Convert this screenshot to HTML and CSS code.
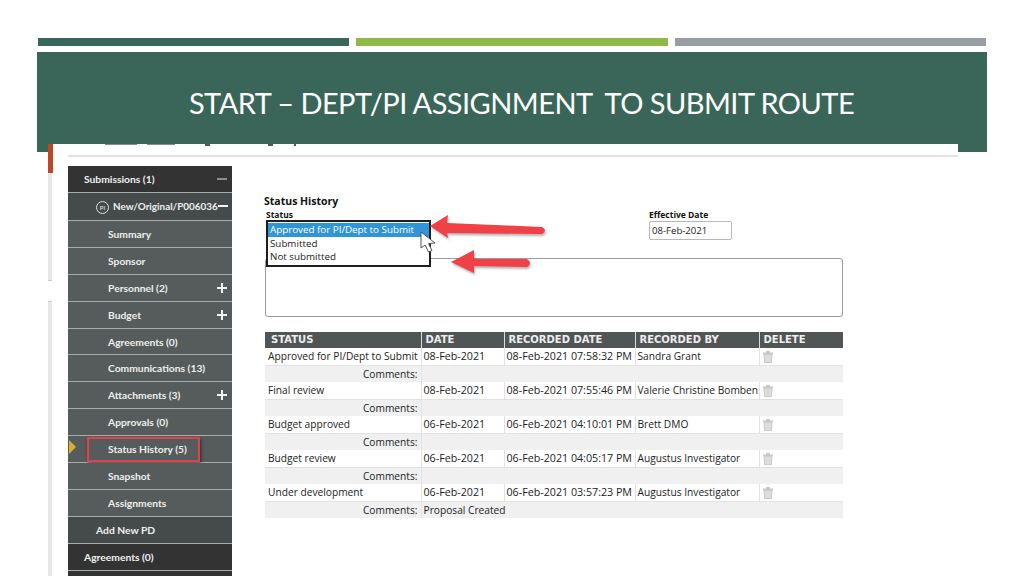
FILE: index.html
```html
<!DOCTYPE html>
<html lang="en">
<head>
  <meta charset="UTF-8" />
  <title>Start - Dept/PI Assignment to Submit Route</title>
  <link rel="stylesheet" href="styles.css">
</head>
<body>
  <div class="slide">
    <div class="top-bars">
      <div class="bar bar-green"></div>
      <div class="bar bar-lime"></div>
      <div class="bar bar-grey"></div>
    </div>
    <div class="title-band">
      <h1>START – DEPT/PI ASSIGNMENT&nbsp; TO SUBMIT ROUTE</h1>
    </div>

    <div class="shot">
      <div class="shot-edge"><div class="edge-red"></div><div class="edge-box"></div></div>
      <div class="shot-main">
        <div class="cut-row">
          <span class="cut-a"></span><span class="cut-b"></span>
          <span class="cut-c"></span><span class="cut-d"></span><span class="cut-e"></span>
        </div>
        <div class="shot-body">
          <ul class="nav">
            <li class="nav-top"><span class="pad-1">Submissions (1)</span><i class="sign minus-dim"></i></li>
            <li class="nav-mid"><span class="pad-2"><span class="pi">PI</span><span class="pd-name">New/Original/P006036</span></span><i class="sign minus-tight"></i></li>
            <li class="nav-sub">Summary</li>
            <li class="nav-sub">Sponsor</li>
            <li class="nav-sub">Personnel (2)<i class="sign plus"></i></li>
            <li class="nav-sub">Budget<i class="sign plus"></i></li>
            <li class="nav-sub">Agreements (0)</li>
            <li class="nav-sub">Communications (13)</li>
            <li class="nav-sub">Attachments (3)<i class="sign plus"></i></li>
            <li class="nav-sub">Approvals (0)</li>
            <li class="nav-sub nav-current">Status History (5)</li>
            <li class="nav-sub">Snapshot</li>
            <li class="nav-sub">Assignments</li>
            <li class="nav-mid"><span class="pad-2">Add New PD</span></li>
            <li class="nav-top"><span class="pad-1">Agreements (0)</span></li>
            <li class="nav-top"></li>
          </ul>

          <div class="content">
            <h2>Status History</h2>
            <div class="form-row">
              <div class="field-status">
                <label>Status</label>
              </div>
              <div class="field-date">
                <label>Effective Date</label>
                <div class="date-input">08-Feb-2021</div>
              </div>
            </div>
            <div class="comment-box"></div>

            <div class="listbox">
              <div class="opt opt-on">Approved for PI/Dept to Submit</div>
              <div class="opt">Submitted</div>
              <div class="opt">Not submitted</div>
            </div>
            <svg class="callouts" width="140" height="70" viewBox="0 0 140 70">
              <path class="arrow" d="M15 16 L33 5 L32 13 L127 17 Q133 20.500 127 24 L32 23 L33 28 Z"/>
              <path class="arrow" d="M36 52 L59 40 L59 49 L112 49 Q118 53 112 57 L59 56 L59 63 Z"/>
              <path class="cursor" d="M6 22 L6 38 L10 35 L13.500 42 L17 40.500 L13.500 33.500 L20 33 Z"/>
            </svg>

            <table class="history">
              <colgroup>
                <col class="c-status"><col class="c-date"><col class="c-rec"><col class="c-by"><col class="c-del">
              </colgroup>
              <thead>
                <tr><th>STATUS</th><th>DATE</th><th>RECORDED DATE</th><th>RECORDED BY</th><th>DELETE</th></tr>
              </thead>
              <tbody>
                <tr class="row-data">
                  <td>Approved for PI/Dept to Submit</td><td>08-Feb-2021</td><td>08-Feb-2021 07:58:32 PM</td><td>Sandra Grant</td>
                  <td><svg class="trash" width="12" height="13" viewBox="0 0 12 13"><path d="M1 2.500 H11 V4 H1 Z M4 1 H8 V2.500 H4 Z" fill="#c8c8c4"/><path d="M2 4 H10 L9.500 12.500 H2.500 Z" fill="#dcdcd8" stroke="#c0c0bc" stroke-width=".8"/></svg></td>
                </tr>
                <tr class="row-note"><td class="note-key">Comments:</td><td colspan="4"></td></tr>
                <tr class="row-data">
                  <td>Final review</td><td>08-Feb-2021</td><td>08-Feb-2021 07:55:46 PM</td><td>Valerie Christine Bomben</td>
                  <td><svg class="trash" width="12" height="13" viewBox="0 0 12 13"><path d="M1 2.500 H11 V4 H1 Z M4 1 H8 V2.500 H4 Z" fill="#c8c8c4"/><path d="M2 4 H10 L9.500 12.500 H2.500 Z" fill="#dcdcd8" stroke="#c0c0bc" stroke-width=".8"/></svg></td>
                </tr>
                <tr class="row-note"><td class="note-key">Comments:</td><td colspan="4"></td></tr>
                <tr class="row-data">
                  <td>Budget approved</td><td>06-Feb-2021</td><td>06-Feb-2021 04:10:01 PM</td><td>Brett DMO</td>
                  <td><svg class="trash" width="12" height="13" viewBox="0 0 12 13"><path d="M1 2.500 H11 V4 H1 Z M4 1 H8 V2.500 H4 Z" fill="#c8c8c4"/><path d="M2 4 H10 L9.500 12.500 H2.500 Z" fill="#dcdcd8" stroke="#c0c0bc" stroke-width=".8"/></svg></td>
                </tr>
                <tr class="row-note"><td class="note-key">Comments:</td><td colspan="4"></td></tr>
                <tr class="row-data">
                  <td>Budget review</td><td>06-Feb-2021</td><td>06-Feb-2021 04:05:17 PM</td><td>Augustus Investigator</td>
                  <td><svg class="trash" width="12" height="13" viewBox="0 0 12 13"><path d="M1 2.500 H11 V4 H1 Z M4 1 H8 V2.500 H4 Z" fill="#c8c8c4"/><path d="M2 4 H10 L9.500 12.500 H2.500 Z" fill="#dcdcd8" stroke="#c0c0bc" stroke-width=".8"/></svg></td>
                </tr>
                <tr class="row-note"><td class="note-key">Comments:</td><td colspan="4"></td></tr>
                <tr class="row-data">
                  <td>Under development</td><td>06-Feb-2021</td><td>06-Feb-2021 03:57:23 PM</td><td>Augustus Investigator</td>
                  <td><svg class="trash" width="12" height="13" viewBox="0 0 12 13"><path d="M1 2.500 H11 V4 H1 Z M4 1 H8 V2.500 H4 Z" fill="#c8c8c4"/><path d="M2 4 H10 L9.500 12.500 H2.500 Z" fill="#dcdcd8" stroke="#c0c0bc" stroke-width=".8"/></svg></td>
                </tr>
                <tr class="row-note"><td class="note-key">Comments:</td><td colspan="4">Proposal Created</td></tr>
              </tbody>
            </table>
          </div>
        </div>
      </div>
    </div>
  </div>
</body>
</html>
```

FILE: styles.css
```css
html, body {
  margin: 0;
  padding: 0;
  background: #fff;
}

.slide {
  width: 1024px;
  height: 576px;
  overflow: hidden;
  background: #fff;
}

/* top strips */
.top-bars {
  display: flex;
  gap: 7px;
  padding: 38px 38px 0 38px;
}
.bar {
  height: 8px;
  flex: 1;
}
.bar-green { background: #38665a; }
.bar-lime { background: #8fba48; }
.bar-grey { background: #989ca3; }

.title-band {
  margin: 6px 37px 0 37px;
  height: 100px;
  background: #396658;
  display: flex;
  justify-content: center;
  padding: 32px 0 0 19px;
  box-sizing: border-box;
}
.title-band h1 {
  margin: 0;
  font-family: "Lato", sans-serif;
  font-weight: 400;
  font-size: 29px;
  letter-spacing: -0.55px;
  line-height: 38px;
  color: #fff;
  white-space: nowrap;
}

/* pasted screenshot sits over the band */
.shot {
  position: relative;
  margin: -8px 66px 0 48px;
  display: flex;
  height: 432px;
  background: #fff;
}
.shot-edge {
  width: 4px;
  background: #e8e8e8;
  margin-right: 16px;
}
.edge-red {
  width: 5px;
  height: 29px;
  background: #bf4528;
}
.edge-box {
  margin-top: 107px;
  height: 20px;
  background: #fff;
  border-top: 1px solid #ccc;
  border-bottom: 1px solid #ccc;
}
.shot-main {
  flex: 1;
}
.cut-row {
  height: 11px;
  border-bottom: 2px solid #e2e2e2;
  display: flex;
  align-items: flex-start;
  padding-left: 37px;
}
.cut-row span {
  display: block;
  height: 1px;
  background: #8a8a8a;
}
.cut-a { width: 32px; }
.cut-b { width: 28px; margin-left: 10px; }
.cut-row .cut-c { width: 5px; height: 2px; margin-left: 30px; background: #555; }
.cut-row .cut-d { width: 5px; height: 2px; margin-left: 58px; background: #555; }
.cut-row .cut-e { width: 2px; height: 2px; margin-left: 21px; background: #555; }

.shot-body {
  display: flex;
  margin-top: 9px;
}

/* side menu */
.nav {
  list-style: none;
  margin: 0;
  padding: 0;
  width: 164px;
  flex: none;
  font-family: "Lato", sans-serif;
  font-weight: 700;
  font-size: 10.3px;
  color: #eef0ef;
}
.nav li {
  position: relative;
  height: 25.9px;
  line-height: 26px;
  border-bottom: 1px solid #a9adac;
  white-space: nowrap;
}
.nav li:first-child { height: 26px; }
.nav-top + .nav-mid { height: 27px; }
.nav-top { background: #333; }
.nav-mid { background: #454b4a; }
.nav-sub {
  background: #555c5b;
  padding-left: 40px;
}
.pad-1 { padding-left: 16px; }
.pad-2 { padding-left: 28px; }
.pd-name { font-size: 9.9px; }
.pi {
  display: inline-block;
  width: 11px;
  height: 11px;
  line-height: 11px;
  border: 1px solid #ddd;
  border-radius: 50%;
  font-size: 6px;
  font-weight: 400;
  text-align: center;
  margin-right: 4px;
}

.sign {
  position: absolute;
  right: 5px;
  top: 12px;
  width: 10px;
  height: 2px;
  background: #f2f2f2;
}
.minus-dim { background: #8d8d8d; }
.minus-tight { right: 4px; }
.plus::after {
  content: "";
  position: absolute;
  left: 4px;
  top: -4px;
  width: 2px;
  height: 10px;
  background: #f2f2f2;
}

.nav-current::before {
  content: "";
  position: absolute;
  left: 1px;
  top: 4px;
  border-left: 7px solid #d9b02c;
  border-top: 7px solid transparent;
  border-bottom: 7px solid transparent;
}
.nav-current::after {
  content: "";
  position: absolute;
  left: 19px;
  top: 1px;
  width: 109px;
  height: 21px;
  border: 2.5px solid #e0424c;
  box-shadow: 1px 2px 3px rgba(0, 0, 0, .5);
}

/* status form */
.content {
  position: relative;
  margin-left: 33px;
  width: 578px;
  font-family: "Open Sans", sans-serif;
  font-size: 10.2px;
  color: #222;
}
.content h2 {
  margin: 0 0 0 -1px;
  padding-top: 29px;
  font-size: 10.5px;
  line-height: 12px;
  font-weight: 700;
  color: #111;
}
.form-row {
  display: flex;
  padding-left: 1px;
  margin-top: 3px;
}
.form-row label {
  display: block;
  font-size: 8.5px;
  line-height: 10px;
  font-weight: 700;
  color: #111;
}
.field-status {
  width: 383px;
}
.date-input {
  width: 79px;
  height: 17px;
  margin-top: 1px;
  line-height: 17px;
  padding-left: 2px;
  font-size: 9.6px;
  border: 1px solid #b8b8b8;
  border-radius: 2px;
}
.comment-box {
  height: 57px;
  margin-top: 18px;
  border: 1px solid #9a9a9a;
  border-radius: 3px;
}

.listbox {
  position: absolute;
  left: 1px;
  top: 54px;
  width: 161px;
  height: 42px;
  border: 2px solid #1e1e1e;
  background: #fff;
  padding-top: 1px;
  font-size: 9.8px;
}
.opt {
  height: 13.5px;
  line-height: 13px;
  padding-left: 2px;
  white-space: nowrap;
}
.opt-on {
  background: #2f95d6;
  color: #fff;
}

.callouts {
  position: absolute;
  left: 150px;
  top: 44px;
  overflow: visible;
}
.arrow {
  fill: #ef4146;
  filter: drop-shadow(1px 2px 1px rgba(0, 0, 0, .3));
}
.cursor {
  fill: #fff;
  stroke: #555;
  stroke-width: 1;
}

/* history table */
.history {
  margin-top: 15px;
  width: 578px;
  border-collapse: collapse;
  table-layout: fixed;
}
.c-status { width: 156px; }
.c-date { width: 83px; }
.c-rec { width: 131px; }
.c-by { width: 124px; }
.c-del { width: 84px; }
.history th {
  background: #515555;
  color: #eee;
  font-family: "DejaVu Sans", sans-serif;
  font-size: 10px;
  font-weight: 700;
  height: 16px;
  line-height: 16px;
  padding: 0 0 0 4px;
  text-align: left;
  border-right: 1px solid #ddd;
}
.history th:first-child { padding-left: 6px; }
.history th:last-child { border-right: 0; }
.history td {
  padding: 0 0 0 2px;
  white-space: nowrap;
  overflow: hidden;
  vertical-align: top;
}
.row-data td {
  height: 17px;
  line-height: 16px;
  background: #fff;
  border-right: 1px solid #e2e2e2;
  border-bottom: 1px solid #e2e2e2;
}
.row-data td:first-child { padding-left: 3px; }
.row-data td:nth-child(2),
.row-data td:nth-child(3) { font-size: 10.7px; }
.row-data td:last-child {
  border-right: 0;
}
.row-note td {
  height: 15px;
  line-height: 15px;
  padding-top: 1px;
  background: #f0f0f0;
}
.history .note-key {
  text-align: right;
  padding: 1px 3px 0 0;
  border-right: 1px solid #e2e2e2;
}
.trash {
  display: block;
  margin: 2px 0 0 0;
}
```
